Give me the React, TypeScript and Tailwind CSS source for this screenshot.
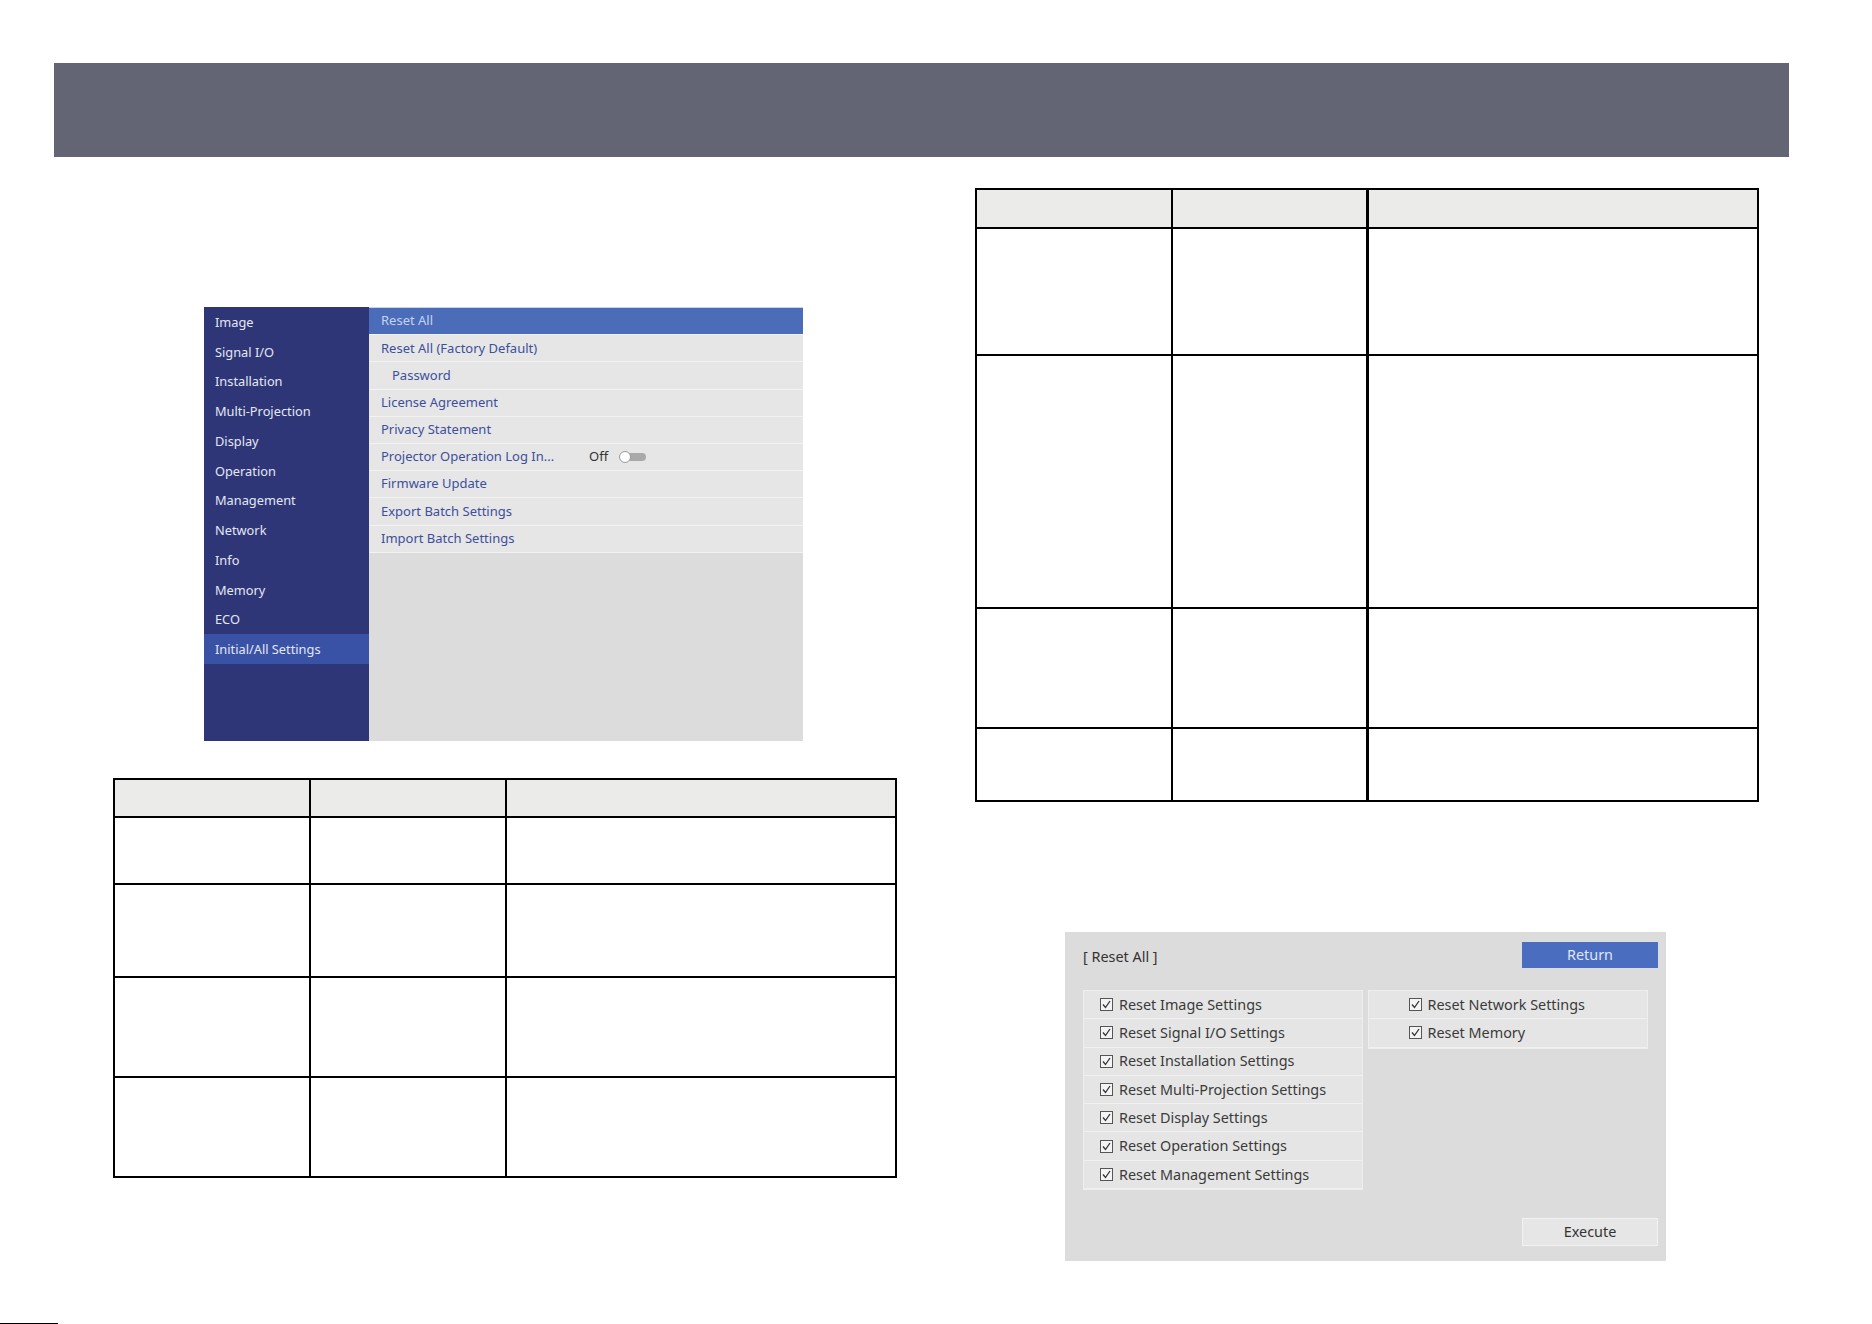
import React from "react";

const font = { fontFamily: '"Noto Sans", "Open Sans", sans-serif' };

const sideItems = [
  "Image",
  "Signal I/O",
  "Installation",
  "Multi-Projection",
  "Display",
  "Operation",
  "Management",
  "Network",
  "Info",
  "Memory",
  "ECO",
  "Initial/All Settings",
];

const menuItems = [
  "Reset All",
  "Reset All (Factory Default)",
  "Password",
  "License Agreement",
  "Privacy Statement",
  "Projector Operation Log In...",
  "Firmware Update",
  "Export Batch Settings",
  "Import Batch Settings",
];

function Toggle() {
  return (
    <div className="relative ml-[11px] h-[12px] w-[27px]">
      <div className="absolute left-[4px] top-[2px] h-[8px] w-[23px] rounded-full bg-[#a9a9a9]" />
      <div className="absolute left-0 top-0 h-[12px] w-[12px] rounded-full border border-[#9a9a9a] bg-white" />
    </div>
  );
}

function MenuShot() {
  return (
    <div className="flex h-[434px] w-[599px] text-[13px]" style={font}>
      <div className="flex w-[165px] flex-col bg-[#2e3678]">
        {sideItems.map((s, i) => (
          <div
            key={s}
            className={
              "flex h-[29.75px] items-center pl-[11px] pt-[1px] text-[12.8px] text-[#e4e7f3] " +
              (i === sideItems.length - 1 ? "bg-[#3a52a6]" : "")
            }
          >
            {s}
          </div>
        ))}
      </div>
      <div className="flex flex-1 flex-col bg-[#dcdcdc]">
        <div className="h-[1px] bg-[#c9d2e6]" />
        {menuItems.map((m, i) => (
          <div
            key={m}
            className={
              "flex h-[27.2px] items-center border-b border-[#f2f2f2] " +
              (i === 0
                ? "bg-[#4a6cb9] text-[#c7d2ef]"
                : "bg-[#e6e6e6] text-[#3d4f9c]") +
              (i === 2 ? " pl-[23px]" : " pl-[12px]")
            }
          >
            {i === 5 ? (
              <>
                <span className="w-[208px] whitespace-nowrap">{m}</span>
                <span className="text-[#333]">Off</span>
                <Toggle />
              </>
            ) : (
              <span className="whitespace-nowrap">{m}</span>
            )}
          </div>
        ))}
      </div>
    </div>
  );
}

function GridTable({
  cols,
  rows,
  thickSecond,
}: {
  cols: string;
  rows: number[];
  thickSecond?: boolean;
}) {
  return (
    <div className={"grid border-l-2 border-t-2 border-black " + cols}>
      {rows.map((h, r) =>
        [0, 1, 2].map((c) => (
          <div
            key={r + "-" + c}
            style={{ height: h }}
            className={
              "border-b-2 border-black " +
              (c === 1 && thickSecond ? "border-r-[3px] " : "border-r-2 ") +
              (r === 0 ? "bg-[#ebebea]" : "bg-white")
            }
          />
        ))
      )}
    </div>
  );
}

function Check() {
  return (
    <div className="flex h-[13px] w-[13px] items-center justify-center border border-[#555] bg-[#f4f4f4]">
      <svg width="11" height="11" viewBox="0 0 11 11">
        <path d="M2 5.5 L4.5 8.5 L9 2" fill="none" stroke="#333" strokeWidth="1.3" />
      </svg>
    </div>
  );
}

const leftChecks = [
  "Reset Image Settings",
  "Reset Signal I/O Settings",
  "Reset Installation Settings",
  "Reset Multi-Projection Settings",
  "Reset Display Settings",
  "Reset Operation Settings",
  "Reset Management Settings",
];
const rightChecks = ["Reset Network Settings", "Reset Memory"];

function CheckRow({ label, indent }: { label: string; indent: string }) {
  return (
    <div
      className={
        "flex h-[28.3px] items-center gap-[6px] border-b border-[#f0f0f0] bg-[#e5e5e5] " +
        indent
      }
    >
      <Check />
      <span className="whitespace-nowrap text-[14.4px] text-[#3a3a3a]">{label}</span>
    </div>
  );
}

function ResetDialog() {
  return (
    <div className="flex h-[329px] w-[601px] flex-col bg-[#dcdcdc] px-[18px]" style={font}>
      <div className="mt-[10px] flex items-start justify-between">
        <span className="mt-[4px] text-[14.4px] text-[#333]">[ Reset All ]</span>
        <div className="mr-[-10px] flex h-[26px] w-[136px] items-center justify-center bg-[#4b6dc0] text-[14.4px] text-[#dfe6f6]">
          Return
        </div>
      </div>
      <div className="mt-[22px] flex gap-[5px]">
        <div className="flex w-[280px] flex-col border border-[#eeeeee]">
          {leftChecks.map((c) => (
            <CheckRow key={c} label={c} indent="pl-[16px]" />
          ))}
        </div>
        <div className="flex h-fit w-[281px] flex-col border border-[#eeeeee]">
          {rightChecks.map((c) => (
            <CheckRow key={c} label={c} indent="pl-[40px]" />
          ))}
        </div>
      </div>
      <div className="mt-auto mb-[15px] flex justify-end">
        <div className="mr-[-10px] flex h-[28px] w-[136px] items-center justify-center border border-[#f2f2f2] bg-[#e6e6e6] text-[14.4px] text-[#333]">
          Execute
        </div>
      </div>
    </div>
  );
}

export default function App() {
  return (
    <div className="flex h-[1324px] w-[1872px] flex-col overflow-hidden bg-white">
      <div className="ml-[54px] mt-[63px] h-[94px] w-[1735px] shrink-0 bg-[#636574]" />
      <div className="flex flex-1">
        <div className="ml-[113px] flex w-[784px] flex-col">
          <div className="ml-[91px] mt-[150px]">
            <MenuShot />
          </div>
          <div className="mt-[37px]">
            <GridTable cols="grid-cols-[196px_196px_390px]" rows={[38, 67, 93, 100, 100]} />
          </div>
        </div>
        <div className="ml-[78px] flex w-[784px] flex-col">
          <div className="mt-[31px]">
            <GridTable
              cols="grid-cols-[196px_196px_390px]"
              rows={[39, 127, 253, 120, 73]}
              thickSecond
            />
          </div>
          <div className="ml-[90px] mt-[130px]">
            <ResetDialog />
          </div>
        </div>
      </div>
      <div className="h-[1px] w-[58px] shrink-0 bg-black" />
    </div>
  );
}
